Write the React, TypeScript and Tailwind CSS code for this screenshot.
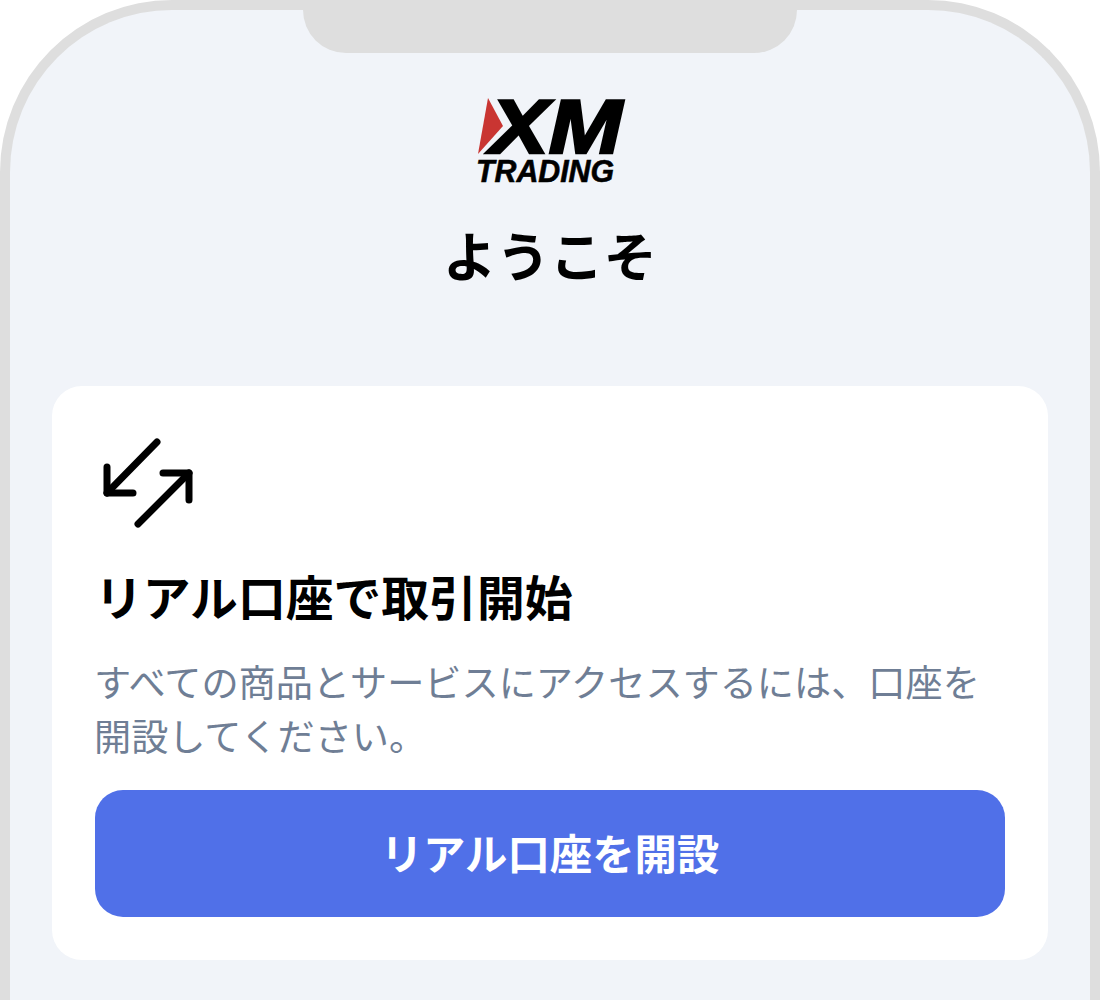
const jp = "font-['Noto_Sans_CJK_JP','Noto_Sans',sans-serif]";

function Logo() {
  return (
    <svg width="150" height="90" viewBox="0 0 150 90" className="block overflow-visible">
      <polygon points="10,1 25,29 0,57" fill="#c93532" />
      <text x="12" y="56" fontFamily="'Liberation Sans', sans-serif" fontWeight="700" fontStyle="italic" fontSize="76" textLength="132" lengthAdjust="spacingAndGlyphs" stroke="#000" strokeWidth="2.5" fill="#000">XM</text>
      <text x="-2" y="85" fontFamily="'Liberation Sans', sans-serif" fontWeight="700" fontStyle="italic" fontSize="31" textLength="138" lengthAdjust="spacingAndGlyphs" stroke="#000" strokeWidth="0.6" fill="#000">TRADING</text>
    </svg>
  );
}

function ExchangeIcon() {
  return (
    <svg width="100" height="92" viewBox="0 0 100 92" fill="none" stroke="#000" strokeWidth="7" strokeLinecap="round" strokeLinejoin="round" className="block">
      <path d="M62 6 L12 57" />
      <path d="M12 31 V57 H38" />
      <path d="M43 88 L94 37" />
      <path d="M68 37 H94 V64" />
    </svg>
  );
}

export default function App() {
  return (
    <div className={`h-[1000px] w-[1100px] overflow-hidden bg-white ${jp}`}>
      <div className="relative flex h-[1000px] flex-col items-center rounded-t-[172px] border-x-[10px] border-t-[10px] border-[#dedede] bg-[#f1f4f9] px-[42px]">
        <div className="absolute left-[293px] top-0 h-[43px] w-[494px] rounded-b-[46px] bg-[#dedede]" />
        <div className="mt-[87px] ml-[6px]">
          <Logo />
        </div>
        <h1 className="mt-[29px] text-[53.5px] font-bold leading-[76px] text-black">ようこそ</h1>
        <div className="mt-[94px] flex h-[574px] w-full flex-col rounded-[30px] bg-white px-[43px]">
          <div className="mt-[50px]">
            <ExchangeIcon />
          </div>
          <h2 className="mt-[33px] text-[47.8px] font-bold leading-[70px] text-black">リアル口座で取引開始</h2>
          <p className="mt-[23px] ml-[-1px] text-[37.17px] leading-[54px] text-[#6f7e95]">
            すべての商品とサービスにアクセスするには、口座を開設してください。
          </p>
          <button className="mt-[28px] flex h-[127px] w-full items-center justify-center rounded-[28px] bg-[#5070e8] pb-[3px] text-[42.4px] font-bold text-white">
            リアル口座を開設
          </button>
        </div>
      </div>
    </div>
  );
}
